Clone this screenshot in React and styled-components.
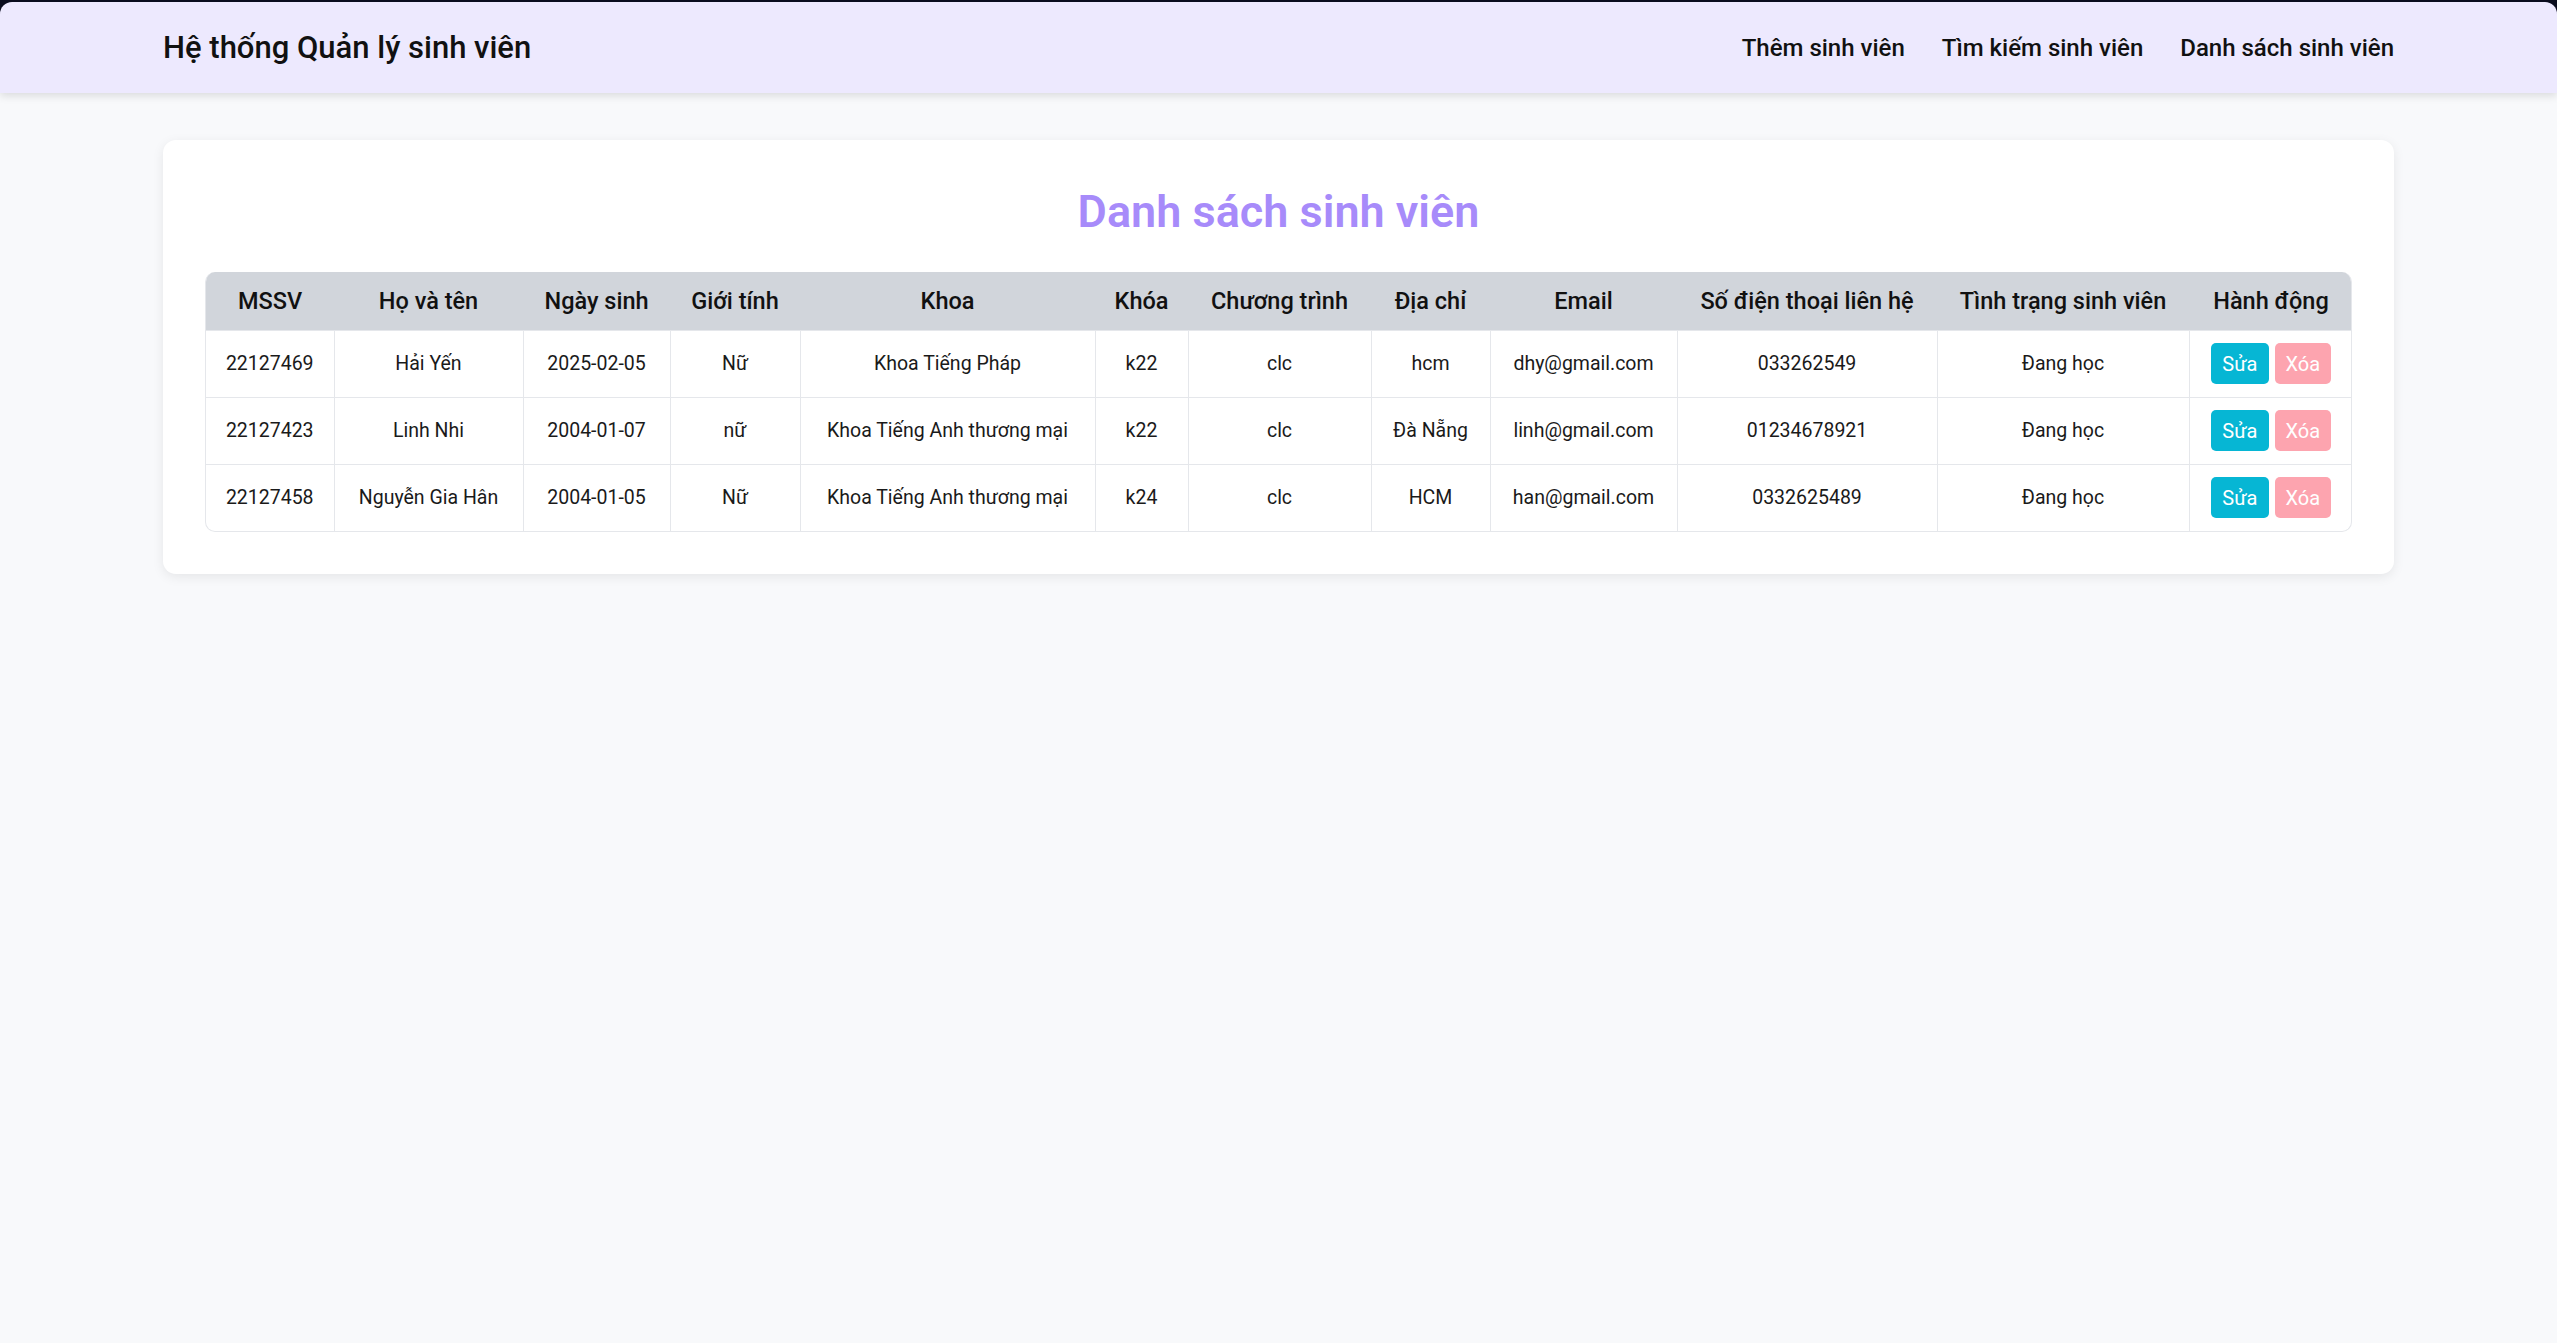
import React from 'react';
import styled, { createGlobalStyle } from 'styled-components';

const GlobalStyle = createGlobalStyle`
  * { box-sizing: border-box; }
  html, body {
    margin: 0;
    padding: 0;
    background: #0b0d1f;
    font-family: "Segoe UI", Roboto, "Noto Sans", sans-serif;
    color: #111;
  }
`;

const Window = styled.div`
  min-height: 100vh;
  display: flex;
  flex-direction: column;
  padding-top: 2px;
  background: #0b0d1f;
`;

const NavBar = styled.header`
  position: relative;
  z-index: 2;
  height: 91px;
  background: #ede9fe;
  border-radius: 12px 12px 0 0;
  box-shadow: 0 3px 8px rgba(0, 0, 0, 0.12);
`;

const NavInner = styled.div`
  max-width: 2231px;
  height: 100%;
  margin: 0 auto;
  display: flex;
  align-items: center;
  justify-content: space-between;
`;

const Brand = styled.div`
  font-size: 31px;
  font-weight: 500;
  color: #111;
`;

const NavLinks = styled.nav`
  display: flex;
  gap: 37px;
`;

const NavLink = styled.a`
  font-size: 24px;
  font-weight: 500;
  color: #111;
  text-decoration: none;
  cursor: pointer;
`;

const Main = styled.main`
  flex: 1;
  background: #f8f9fb;
  padding-top: 47px;
`;

const Card = styled.section`
  max-width: 2231px;
  margin: 0 auto;
  background: #fff;
  border-radius: 13px;
  box-shadow: 0 3px 12px rgba(0, 0, 0, 0.08);
  padding: 42px;
`;

const Heading = styled.h2`
  margin: 0 0 30px;
  height: 60px;
  line-height: 60px;
  text-align: center;
  font-size: 45px;
  font-weight: 600;
  color: #a78bfa;
`;

const TableWrap = styled.div`
  border-radius: 10px;
  overflow: hidden;
  border: 1px solid #e5e7eb;
  border-top: none;
`;

const Table = styled.table`
  width: 100%;
  table-layout: fixed;
  border-collapse: collapse;

  tbody tr:last-child td { border-bottom: none; }
  tbody td:first-child { border-left: none; }
  tbody td:last-child { border-right: none; }
`;

const Th = styled.th`
  height: 58px;
  padding: 0;
  background: #d1d5db;
  font-size: 23.5px;
  font-weight: 500;
  color: #111;
  text-align: center;
  white-space: nowrap;
`;

const Td = styled.td`
  height: 67px;
  padding: 0;
  border: 1px solid #e5e7eb;
  font-size: 19.5px;
  color: #1a1a1a;
  text-align: center;
  white-space: nowrap;
`;

const Actions = styled.div`
  display: flex;
  justify-content: center;
  gap: 6px;
`;

const Button = styled.button`
  height: 41px;
  padding: 0 11px;
  border: none;
  border-radius: 5px;
  font-family: inherit;
  font-size: 20px;
  color: #fff;
  background: ${(p) => (p.$danger ? '#fda4af' : '#06b6d4')};
  cursor: pointer;
`;

const columns = [
  ['MSSV', 128],
  ['Họ và tên', 189],
  ['Ngày sinh', 147],
  ['Giới tính', 130],
  ['Khoa', 295],
  ['Khóa', 93],
  ['Chương trình', 183],
  ['Địa chỉ', 119],
  ['Email', 187],
  ['Số điện thoại liên hệ', 260],
  ['Tình trạng sinh viên', 252],
  ['Hành động', 164],
];

const students = [
  ['22127469', 'Hải Yến', '2025-02-05', 'Nữ', 'Khoa Tiếng Pháp', 'k22', 'clc', 'hcm', 'dhy@gmail.com', '033262549', 'Đang học'],
  ['22127423', 'Linh Nhi', '2004-01-07', 'nữ', 'Khoa Tiếng Anh thương mại', 'k22', 'clc', 'Đà Nẵng', 'linh@gmail.com', '01234678921', 'Đang học'],
  ['22127458', 'Nguyễn Gia Hân', '2004-01-05', 'Nữ', 'Khoa Tiếng Anh thương mại', 'k24', 'clc', 'HCM', 'han@gmail.com', '0332625489', 'Đang học'],
];

export default function App() {
  return (
    <Window>
      <GlobalStyle />
      <NavBar>
        <NavInner>
          <Brand>Hệ thống Quản lý sinh viên</Brand>
          <NavLinks>
            <NavLink>Thêm sinh viên</NavLink>
            <NavLink>Tìm kiếm sinh viên</NavLink>
            <NavLink>Danh sách sinh viên</NavLink>
          </NavLinks>
        </NavInner>
      </NavBar>
      <Main>
        <Card>
          <Heading>Danh sách sinh viên</Heading>
          <TableWrap>
            <Table>
              <colgroup>
                {columns.map(([name, w]) => (
                  <col key={name} style={{ width: w }} />
                ))}
              </colgroup>
              <thead>
                <tr>
                  {columns.map(([name]) => (
                    <Th key={name}>{name}</Th>
                  ))}
                </tr>
              </thead>
              <tbody>
                {students.map((s) => (
                  <tr key={s[0]}>
                    {s.map((v, i) => (
                      <Td key={i}>{v}</Td>
                    ))}
                    <Td>
                      <Actions>
                        <Button>Sửa</Button>
                        <Button $danger>Xóa</Button>
                      </Actions>
                    </Td>
                  </tr>
                ))}
              </tbody>
            </Table>
          </TableWrap>
        </Card>
      </Main>
    </Window>
  );
}
